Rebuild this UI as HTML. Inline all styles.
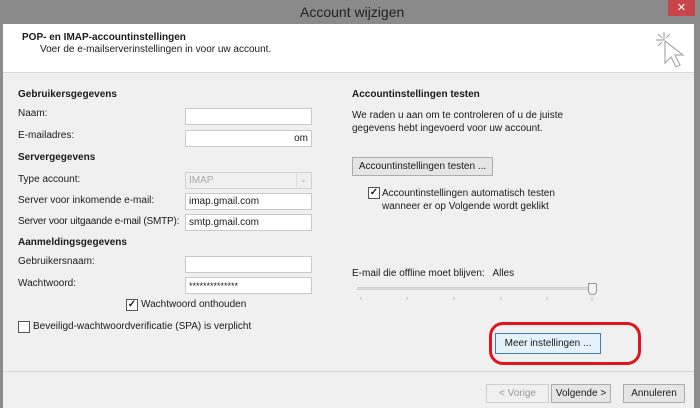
<!DOCTYPE html>
<html><head><meta charset="utf-8"><style>
*{box-sizing:border-box;margin:0;padding:0}
body{width:700px;height:408px;overflow:hidden;background:#8c8c8c;font-family:"Liberation Sans",sans-serif;font-size:10px;color:#1a1a1a;position:relative}
.a{position:absolute;white-space:nowrap}
.b{font-weight:bold}
.inp{position:absolute;background:#fff;border:1px solid #c9c9c9;height:17px;font-size:10px;padding:2px 3px;line-height:12px}
.btn{position:absolute;background:#e5e5e5;border:1px solid #acacac;text-align:center;line-height:17px;font-size:10px}
.cb{position:absolute;width:12px;height:12px;border:1px solid #555;background:#fff;font-size:10px;line-height:10px;text-align:center;font-weight:bold}
</style></head><body>
<div class="a" style="left:0;top:0;width:700px;height:24px;background:#8a8a8a"></div>
<div class="a" style="left:300px;top:4px;font-size:14px;color:#222">Account wijzigen</div>
<div class="a" style="left:668px;top:0;width:27px;height:16px;background:#c8464b;color:#fff;text-align:center;font-size:11px;line-height:16px">✕</div>
<div class="a" style="left:3px;top:24px;width:691px;height:384px;background:#f0f0f0"></div>
<div class="a" style="left:3px;top:24px;width:691px;height:49px;background:#fff;border-bottom:1px solid #d8d8d8"></div>
<div class="a b" style="left:22px;top:32px">POP- en IMAP-accountinstellingen</div>
<div class="a" style="left:40px;top:44px">Voer de e-mailserverinstellingen in voor uw account.</div>
<svg class="a" style="left:652px;top:28px" width="36" height="42" viewBox="0 0 36 42" fill="none" stroke="#aaa" stroke-width="1.2"><path d="M12 4v8M4 12h8M6 6l4 4M18 6l-4 4M6 18l4-4"/><path d="M13 13l0 22 6-6 5 10 4-2-5-10 8 0z" fill="#fff"/></svg>
<div class="a b" style="left:18px;top:89px">Gebruikersgegevens</div>
<div class="a" style="left:18px;top:108px">Naam:</div>
<div class="inp" style="left:185px;top:108px;width:127px"></div>
<div class="a" style="left:18px;top:130px">E-mailadres:</div>
<div class="inp" style="left:185px;top:130px;width:127px;text-align:right">om</div>
<div class="a b" style="left:18px;top:152px">Servergegevens</div>
<div class="a" style="left:18px;top:174px">Type account:</div>
<div class="inp" style="left:185px;top:172px;width:127px;background:#f0f0f0;color:#aaa;border-color:#d0d0d0">IMAP<span style="position:absolute;right:1px;top:1px;width:14px;height:13px;border-left:1px solid #ddd;font-size:8px;text-align:center">⌄</span></div>
<div class="a" style="left:18px;top:195px">Server voor inkomende e-mail:</div>
<div class="inp" style="left:185px;top:193px;width:127px">imap.gmail.com</div>
<div class="a" style="left:18px;top:216px;letter-spacing:-0.2px">Server voor uitgaande e-mail (SMTP):</div>
<div class="inp" style="left:185px;top:214px;width:127px">smtp.gmail.com</div>
<div class="a b" style="left:18px;top:237px">Aanmeldingsgegevens</div>
<div class="a" style="left:18px;top:256px">Gebruikersnaam:</div>
<div class="inp" style="left:185px;top:256px;width:127px"></div>
<div class="a" style="left:18px;top:278px">Wachtwoord:</div>
<div class="inp" style="left:185px;top:277px;width:127px;font-size:9px">**************</div>
<div class="cb" style="left:126px;top:299px">✓</div>
<div class="a" style="left:141px;top:299px">Wachtwoord onthouden</div>
<div class="cb" style="left:18px;top:321px"></div>
<div class="a" style="left:33px;top:321px">Beveiligd-wachtwoordverificatie (SPA) is verplicht</div>
<div class="a b" style="left:352px;top:89px">Accountinstellingen testen</div>
<div class="a" style="left:352px;top:109px;line-height:13px">We raden u aan om te controleren of u de juiste<br>gegevens hebt ingevoerd voor uw account.</div>
<div class="btn" style="left:352px;top:157px;width:141px;height:19px">Accountinstellingen testen ...</div>
<div class="cb" style="left:368px;top:187px">✓</div>
<div class="a" style="left:382px;top:187px;line-height:13px">Accountinstellingen automatisch testen<br>wanneer er op Volgende wordt geklikt</div>
<div class="a" style="left:352px;top:268px">E-mail die offline moet blijven:&nbsp;&nbsp; Alles</div>
<div class="a" style="left:357px;top:287px;width:236px;height:3px;background:#ddd;border:1px solid #d0d0d0"></div>
<div class="a" style="left:588px;top:283px;width:9px;height:12px;background:#f4f4f4;border:1px solid #999;border-radius:0 0 4px 4px"></div>
<svg class="a" style="left:355px;top:297px" width="245" height="5"><g stroke="#bbb"><path d="M6 0v3M52 0v3M99 0v3M146 0v3M192 0v3M237 0v4"/></g></svg>
<div class="btn" style="left:495px;top:333px;width:106px;height:21px;background:#e5f1fb;border-color:#3c7fb1;line-height:19px">Meer instellingen ...</div>
<div class="a" style="left:489px;top:322px;width:152px;height:43px;border:3px solid #e0141e;border-radius:14px"></div>
<div class="a" style="left:3px;top:371px;width:691px;height:1px;background:#d5d5d5"></div>
<div class="btn" style="left:486px;top:384px;width:63px;height:19px;color:#999;border-color:#cfcfcf;background:#f0f0f0">&lt; Vorige</div>
<div class="btn" style="left:551px;top:384px;width:60px;height:19px">Volgende &gt;</div>
<div class="btn" style="left:623px;top:384px;width:62px;height:19px">Annuleren</div>
<div class="a" style="left:694px;top:24px;width:6px;height:384px;background:#8c8c8c"></div>
</body></html>
